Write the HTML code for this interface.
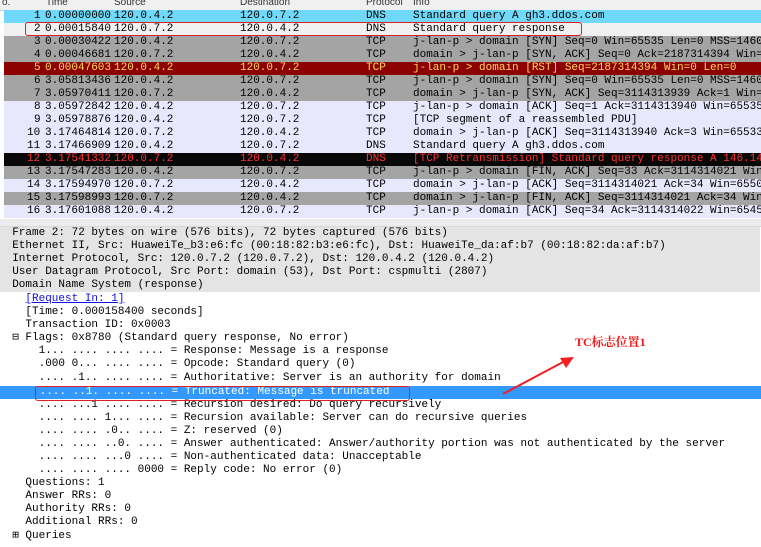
<!DOCTYPE html>
<html><head><meta charset="utf-8"><style>
body{margin:0;width:761px;height:547px;overflow:hidden;background:#fff;font-family:"Liberation Mono","DejaVu Sans Mono",monospace;font-size:11px;position:relative}
.hdr{position:absolute;left:0;top:0;width:761px;height:10px;background:#f0f0f0;font-family:"Liberation Sans",sans-serif;font-size:10px;line-height:6px;color:#333;overflow:hidden;border-bottom:1px solid #ccc}
.hdr span{position:absolute;top:0}
.r{position:absolute;left:4px;width:757px;height:13px;line-height:13px;white-space:pre;overflow:hidden}
.r span{position:absolute;top:0}
.d{position:absolute;left:0;width:761px;height:13px;line-height:13px;white-space:pre}
.g{background:#e4e4e4}
.box{position:absolute;border:1.5px solid #e02020;border-radius:3px}
</style></head><body>
<div class="hdr"><span style="left:2px">o.</span><span style="left:46px">Time</span><span style="left:114px">Source</span><span style="left:240px">Destination</span><span style="left:366px">Protocol</span><span style="left:413px">Info</span></div>

<div class="r" style="top:10px;background:#70d8f8"><span style="left:30px">1</span><span style="left:41px">0.00000000</span><span style="left:110px">120.0.4.2</span><span style="left:236px">120.0.7.2</span><span style="left:362px">DNS</span><span style="left:409px">Standard query A gh3.ddos.com</span></div>
<div class="r" style="top:23px;background:#f0f0f0"><span style="left:30px">2</span><span style="left:41px">0.00015840</span><span style="left:110px">120.0.7.2</span><span style="left:236px">120.0.4.2</span><span style="left:362px">DNS</span><span style="left:409px">Standard query response</span></div>
<div class="r" style="top:36px;background:#a4a4a4"><span style="left:30px">3</span><span style="left:41px">0.00030422</span><span style="left:110px">120.0.4.2</span><span style="left:236px">120.0.7.2</span><span style="left:362px">TCP</span><span style="left:409px">j-lan-p &gt; domain [SYN] Seq=0 Win=65535 Len=0 MSS=1460</span></div>
<div class="r" style="top:49px;background:#a4a4a4"><span style="left:30px">4</span><span style="left:41px">0.00046681</span><span style="left:110px">120.0.7.2</span><span style="left:236px">120.0.4.2</span><span style="left:362px">TCP</span><span style="left:409px">domain &gt; j-lan-p [SYN, ACK] Seq=0 Ack=2187314394 Win=</span></div>
<div class="r" style="top:62px;background:#8c0000;color:#ffd860"><span style="left:30px">5</span><span style="left:41px">0.00047603</span><span style="left:110px">120.0.4.2</span><span style="left:236px">120.0.7.2</span><span style="left:362px">TCP</span><span style="left:409px">j-lan-p &gt; domain [RST] Seq=2187314394 Win=0 Len=0</span></div>
<div class="r" style="top:75px;background:#a4a4a4"><span style="left:30px">6</span><span style="left:41px">3.05813436</span><span style="left:110px">120.0.4.2</span><span style="left:236px">120.0.7.2</span><span style="left:362px">TCP</span><span style="left:409px">j-lan-p &gt; domain [SYN] Seq=0 Win=65535 Len=0 MSS=1460</span></div>
<div class="r" style="top:88px;background:#a4a4a4"><span style="left:30px">7</span><span style="left:41px">3.05970411</span><span style="left:110px">120.0.7.2</span><span style="left:236px">120.0.4.2</span><span style="left:362px">TCP</span><span style="left:409px">domain &gt; j-lan-p [SYN, ACK] Seq=3114313939 Ack=1 Win=</span></div>
<div class="r" style="top:101px;background:#e8e8fc"><span style="left:30px">8</span><span style="left:41px">3.05972842</span><span style="left:110px">120.0.4.2</span><span style="left:236px">120.0.7.2</span><span style="left:362px">TCP</span><span style="left:409px">j-lan-p &gt; domain [ACK] Seq=1 Ack=3114313940 Win=65535</span></div>
<div class="r" style="top:114px;background:#e8e8fc"><span style="left:30px">9</span><span style="left:41px">3.05978876</span><span style="left:110px">120.0.4.2</span><span style="left:236px">120.0.7.2</span><span style="left:362px">TCP</span><span style="left:409px">[TCP segment of a reassembled PDU]</span></div>
<div class="r" style="top:127px;background:#e8e8fc"><span style="left:23px">10</span><span style="left:41px">3.17464814</span><span style="left:110px">120.0.7.2</span><span style="left:236px">120.0.4.2</span><span style="left:362px">TCP</span><span style="left:409px">domain &gt; j-lan-p [ACK] Seq=3114313940 Ack=3 Win=65533</span></div>
<div class="r" style="top:140px;background:#e8e8fc"><span style="left:23px">11</span><span style="left:41px">3.17466909</span><span style="left:110px">120.0.4.2</span><span style="left:236px">120.0.7.2</span><span style="left:362px">DNS</span><span style="left:409px">Standard query A gh3.ddos.com</span></div>
<div class="r" style="top:153px;background:#080808;color:#ff3030"><span style="left:23px">12</span><span style="left:41px">3.17541332</span><span style="left:110px">120.0.7.2</span><span style="left:236px">120.0.4.2</span><span style="left:362px">DNS</span><span style="left:409px">[TCP Retransmission] Standard query response A 146.14</span></div>
<div class="r" style="top:166px;background:#a4a4a4"><span style="left:23px">13</span><span style="left:41px">3.17547283</span><span style="left:110px">120.0.4.2</span><span style="left:236px">120.0.7.2</span><span style="left:362px">TCP</span><span style="left:409px">j-lan-p &gt; domain [FIN, ACK] Seq=33 Ack=3114314021 Win</span></div>
<div class="r" style="top:179px;background:#e8e8fc"><span style="left:23px">14</span><span style="left:41px">3.17594970</span><span style="left:110px">120.0.7.2</span><span style="left:236px">120.0.4.2</span><span style="left:362px">TCP</span><span style="left:409px">domain &gt; j-lan-p [ACK] Seq=3114314021 Ack=34 Win=6550</span></div>
<div class="r" style="top:192px;background:#a4a4a4"><span style="left:23px">15</span><span style="left:41px">3.17598993</span><span style="left:110px">120.0.7.2</span><span style="left:236px">120.0.4.2</span><span style="left:362px">TCP</span><span style="left:409px">domain &gt; j-lan-p [FIN, ACK] Seq=3114314021 Ack=34 Win</span></div>
<div class="r" style="top:205px;background:#e8e8fc"><span style="left:23px">16</span><span style="left:41px">3.17601088</span><span style="left:110px">120.0.4.2</span><span style="left:236px">120.0.7.2</span><span style="left:362px">TCP</span><span style="left:409px">j-lan-p &gt; domain [ACK] Seq=34 Ack=3114314022 Win=6545</span></div>

<div style="position:absolute;left:0;top:219px;width:761px;height:7px;background:#ececec;border-bottom:1px solid #d8d8d8"></div>
<div class="box" style="left:25px;top:22px;width:555px;height:12px"></div>

<div class="d g" style="top:227px;left:-1px">  Frame 2: 72 bytes on wire (576 bits), 72 bytes captured (576 bits)</div>
<div class="d g" style="top:240px;left:-1px">  Ethernet II, Src: HuaweiTe_b3:e6:fc (00:18:82:b3:e6:fc), Dst: HuaweiTe_da:af:b7 (00:18:82:da:af:b7)</div>
<div class="d g" style="top:253px;left:-1px">  Internet Protocol, Src: 120.0.7.2 (120.0.7.2), Dst: 120.0.4.2 (120.0.4.2)</div>
<div class="d g" style="top:266px;left:-1px">  User Datagram Protocol, Src Port: domain (53), Dst Port: cspmulti (2807)</div>
<div class="d g" style="top:279px;left:-1px">  Domain Name System (response)</div>
<div class="d" style="top:293px;left:-1px">    <span style="color:#1010e0;text-decoration:underline">[Request In: 1]</span></div>
<div class="d" style="top:306px;left:-1px">    [Time: 0.000158400 seconds]</div>
<div class="d" style="top:319px;left:-1px">    Transaction ID: 0x0003</div>
<div class="d" style="top:332px;left:-1px">  ⊟ Flags: 0x8780 (Standard query response, No error)</div>
<div class="d" style="top:345px;left:-1px">      1... .... .... .... = Response: Message is a response</div>
<div class="d" style="top:358px;left:-1px">      .000 0... .... .... = Opcode: Standard query (0)</div>
<div class="d" style="top:372px;left:-1px">      .... .1.. .... .... = Authoritative: Server is an authority for domain</div>
<div class="d" style="top:386px;background:#3399ff;color:#fff">      .... ..1. .... .... = Truncated: Message is truncated</div>
<div class="d" style="top:399px;left:-1px">      .... ...1 .... .... = Recursion desired: Do query recursively</div>
<div class="d" style="top:412px;left:-1px">      .... .... 1... .... = Recursion available: Server can do recursive queries</div>
<div class="d" style="top:425px;left:-1px">      .... .... .0.. .... = Z: reserved (0)</div>
<div class="d" style="top:438px;left:-1px">      .... .... ..0. .... = Answer authenticated: Answer/authority portion was not authenticated by the server</div>
<div class="d" style="top:451px;left:-1px">      .... .... ...0 .... = Non-authenticated data: Unacceptable</div>
<div class="d" style="top:464px;left:-1px">      .... .... .... 0000 = Reply code: No error (0)</div>
<div class="d" style="top:477px;left:-1px">    Questions: 1</div>
<div class="d" style="top:490px;left:-1px">    Answer RRs: 0</div>
<div class="d" style="top:503px;left:-1px">    Authority RRs: 0</div>
<div class="d" style="top:516px;left:-1px">    Additional RRs: 0</div>
<div class="d" style="top:530px;left:-1px">  ⊞ Queries</div>
<div class="box" style="left:35px;top:386px;width:373px;height:13px"></div>

<svg style="position:absolute;left:0;top:0" width="761" height="547"><line x1="503" y1="394" x2="565" y2="361" stroke="#f02020" stroke-width="2"/><polygon points="574,357 560,358 566,368" fill="#f02020"/></svg>
<div style="position:absolute;left:575px;top:333px;color:#f01818;font-weight:bold;font-size:12px;font-family:'Liberation Serif','Noto Serif CJK SC',serif">TC标志位置1</div>
</body></html>
